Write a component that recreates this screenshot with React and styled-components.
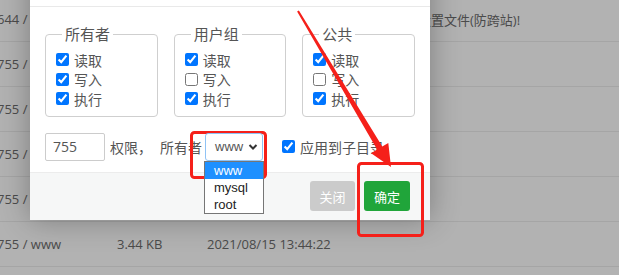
import styled, { createGlobalStyle } from "styled-components";

const GlobalStyle = createGlobalStyle`
  html, body {
    margin: 0;
    padding: 0;
    overflow: hidden;
    background: #fff;
  }
  body {
    font-family: "Open Sans", "Noto Sans CJK SC", sans-serif;
  }
`;

const Page = styled.div`
  position: relative;
  width: 619px;
  height: 275px;
  overflow: hidden;
  background: #fff;
`;

const FileTable = styled.div`
  margin-top: -3px;
  margin-left: -3px;
`;

const FileRow = styled.div`
  display: grid;
  grid-template-columns: 120px 90px 211px 1fr;
  align-items: center;
  height: 45px;
  box-sizing: border-box;
  border-bottom: 1px solid #ececec;
  font-size: 13px;
  color: #6c6c6c;
  white-space: nowrap;
`;

const Cell = styled.span`
  overflow: hidden;
`;

const Overlay = styled.div`
  position: absolute;
  inset: 0;
  background: rgba(0, 0, 0, 0.3);
`;

const Modal = styled.div`
  position: absolute;
  left: 30px;
  top: -38px;
  width: 400px;
  background: #fff;
  box-shadow: 0 0 28px rgba(0, 0, 0, 0.3);
  display: flex;
  flex-direction: column;
`;

const ModalHeader = styled.div`
  height: 45px;
  box-sizing: border-box;
  border-bottom: 1px solid #e9e9e9;
  padding: 0 20px;
  display: flex;
  align-items: center;
  font-size: 14px;
  color: #333;
`;

const ModalBody = styled.div`
  padding: 17px 15px 11px;
  display: flex;
  flex-direction: column;
  gap: 16px;
`;

const GroupRow = styled.div`
  display: flex;
  gap: 16px;
`;

const Group = styled.fieldset`
  margin: 0;
  width: 113px;
  box-sizing: border-box;
  min-width: 0;
  padding: 6px 10px 7px;
  border: 1px solid #cfcfcf;
  border-radius: 4px;
  display: flex;
  flex-direction: column;
`;

const Legend = styled.legend`
  margin-left: 6px;
  padding: 0 3px;
  font-size: 15px;
  line-height: 20px;
  color: #555;
  font-family: "Noto Sans CJK SC", sans-serif;
`;

const CheckLine = styled.label`
  display: flex;
  align-items: center;
  height: 19.5px;
  font-size: 14px;
  color: #555;
  font-family: "Noto Sans CJK SC", sans-serif;
`;

const Check = styled.input.attrs({ type: "checkbox" })`
  width: 13px;
  height: 13px;
  margin: 0 5px 0 0;
`;

const ControlRow = styled.div`
  display: flex;
  align-items: center;
  height: 28px;
  font-size: 14px;
  color: #555;
  font-family: "Noto Sans CJK SC", sans-serif;
`;

const NumberInput = styled.input`
  width: 60px;
  height: 28px;
  box-sizing: border-box;
  border: 1px solid #ccc;
  border-radius: 2px;
  padding: 0 7px;
  font-size: 14px;
  font-family: "Open Sans", sans-serif;
  color: #555;
  outline: none;
`;

const Text = styled.span`
  margin-left: ${(p) => p.$gap || 0}px;
  white-space: nowrap;
`;

const SelectWrap = styled.div`
  position: relative;
  margin-left: 3px;
  z-index: 3;
`;

const SelectBox = styled.div`
  width: 58px;
  height: 28px;
  box-sizing: border-box;
  border: 1px solid #8fc3f5;
  border-radius: 3px;
  display: flex;
  align-items: center;
  justify-content: space-between;
  padding: 0 4px 0 9px;
  font-family: "Liberation Sans", sans-serif;
  font-size: 13px;
  color: #555;
`;

const OptionList = styled.ul`
  position: absolute;
  top: 28px;
  left: -1px;
  width: 60px;
  box-sizing: border-box;
  margin: 0;
  padding: 0;
  list-style: none;
  background: #fff;
  border: 1px solid #767676;
  font-family: "Liberation Sans", sans-serif;
  font-size: 13px;
  color: #222;
`;

const Option = styled.li`
  height: 17px;
  line-height: 17px;
  padding-left: 9px;
  background: ${(p) => (p.$active ? "#1e90ff" : "transparent")};
  color: ${(p) => (p.$active ? "#fff" : "#222")};
`;

const SubdirLabel = styled.label`
  display: flex;
  align-items: center;
  margin-left: 19px;
  white-space: nowrap;
`;

const ModalFooter = styled.div`
  height: 48px;
  box-sizing: border-box;
  border-top: 1px solid #ececec;
  background: #f6f7f7;
  display: flex;
  align-items: center;
  justify-content: flex-end;
  gap: 9px;
  padding: 0 20px;
`;

const Button = styled.button`
  height: 30px;
  width: ${(p) => p.$w}px;
  border: none;
  border-radius: 3px;
  font-size: 13px;
  font-family: "Noto Sans CJK SC", sans-serif;
  color: #fff;
  background: ${(p) => (p.$primary ? "#20a53a" : "#cbcbcb")};
  cursor: pointer;
`;

const Marks = styled.svg`
  position: absolute;
  left: 0;
  top: 0;
  pointer-events: none;
  z-index: ${(p) => p.$z};
`;

const rows = [
  ["644 /", "", "", "设置文件(防跨站)!"],
  ["755 /", "", "", ""],
  ["755 /", "", "", ""],
  ["755 /", "", "", ""],
  ["755 /", "", "", ""],
  ["755 / www", "3.44 KB", "2021/08/15 13:44:22", ""],
  ["", "", "", ""],
];

const groups = [
  { name: "所有者", checks: [true, true, true] },
  { name: "用户组", checks: [true, false, true] },
  { name: "公共", checks: [true, false, true] },
];

const perms = ["读取", "写入", "执行"];

export default function App() {
  return (
    <Page>
      <GlobalStyle />
      <FileTable>
        {rows.map((r, i) => (
          <FileRow key={i}>
            {r.map((c, j) => (
              <Cell key={j}>{c}</Cell>
            ))}
          </FileRow>
        ))}
      </FileTable>
      <Overlay />
      <Modal>
        <ModalHeader>设置权限</ModalHeader>
        <ModalBody>
          <GroupRow>
            {groups.map((g) => (
              <Group key={g.name}>
                <Legend>{g.name}</Legend>
                {perms.map((p, i) => (
                  <CheckLine key={p}>
                    <Check defaultChecked={g.checks[i]} />
                    {p}
                  </CheckLine>
                ))}
              </Group>
            ))}
          </GroupRow>
          <ControlRow>
            <NumberInput defaultValue="755" />
            <Text $gap={5}>权限，</Text>
            <Text $gap={8}>所有者</Text>
            <SelectWrap>
              <SelectBox>
                <span>www</span>
                <svg width="10" height="8" viewBox="0 0 10 8">
                  <polyline
                    points="1.5,2 5,5.5 8.5,2"
                    fill="none"
                    stroke="#333"
                    strokeWidth="2"
                  />
                </svg>
              </SelectBox>
              <OptionList>
                <Option $active>www</Option>
                <Option>mysql</Option>
                <Option>root</Option>
              </OptionList>
            </SelectWrap>
            <SubdirLabel>
              <Check defaultChecked />
              应用到子目录
            </SubdirLabel>
          </ControlRow>
        </ModalBody>
        <ModalFooter>
          <Button $w={45}>关闭</Button>
          <Button $w={46} $primary>
            确定
          </Button>
        </ModalFooter>
      </Modal>
      <Marks $z={2} width="619" height="275" viewBox="0 0 619 275">
        <rect x="191.5" y="132.5" width="74" height="45" rx="3" fill="none" stroke="#f5201a" strokeWidth="3" />
      </Marks>
      <Marks $z={4} width="619" height="275" viewBox="0 0 619 275">
        <rect x="358.5" y="163.5" width="64" height="72" rx="3" fill="none" stroke="#f5201a" strokeWidth="3" />
        <polygon
          points="297.1,11.5 298.9,10.5 382.3,146.6 388.3,143 391,167 371.1,153.2 377.1,149.6"
          fill="#f5201a"
        />
      </Marks>
    </Page>
  );
}
